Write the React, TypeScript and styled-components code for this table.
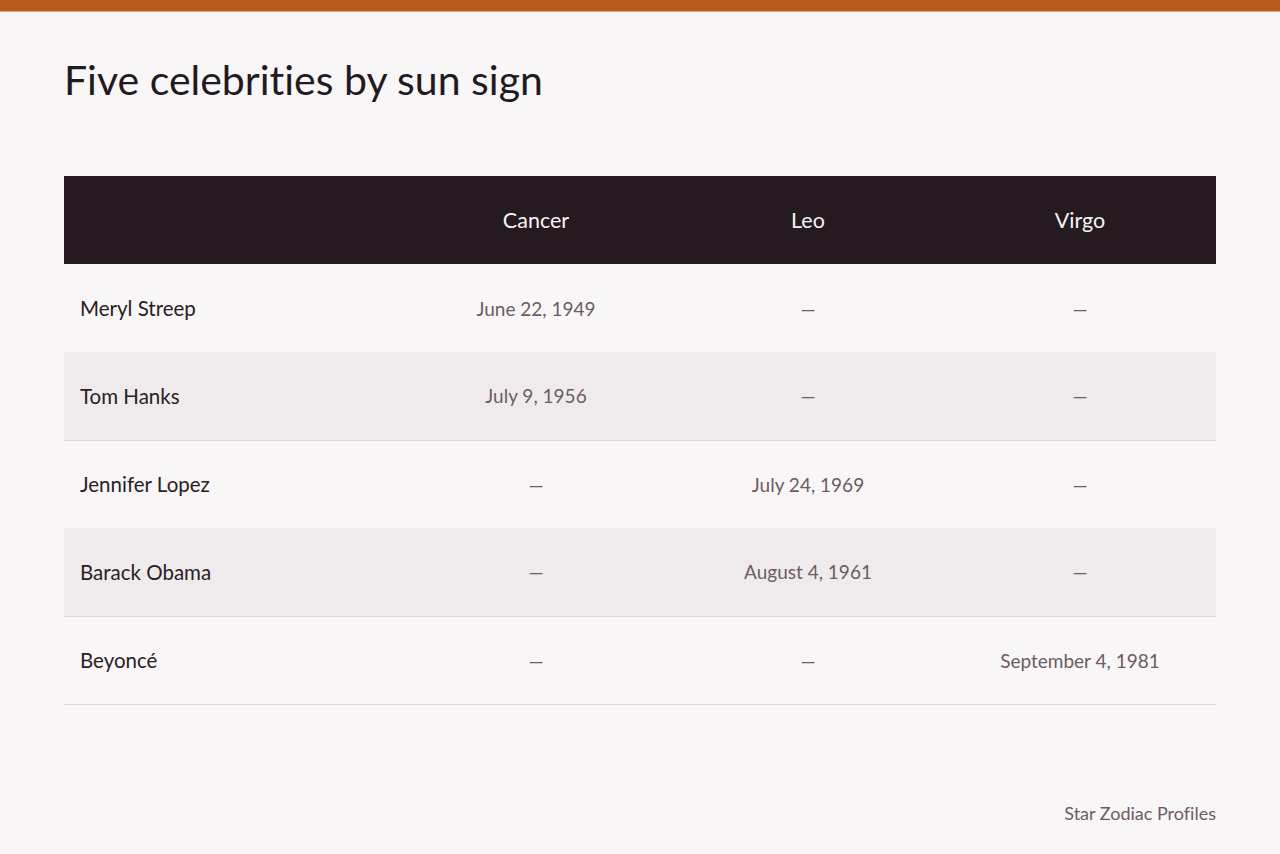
import React from "react";
import styled, { createGlobalStyle } from "styled-components";

const Global = createGlobalStyle`
  html, body { margin: 0; padding: 0; background: #f8f6f7; }
  body {
    font-family: Lato, "Noto Sans", "Liberation Sans", sans-serif;
    -webkit-font-smoothing: antialiased;
    font-variant-ligatures: none;
    font-feature-settings: "liga" 0, "dlig" 0;
  }
  * { box-sizing: border-box; }
`;

const TopBar = styled.div`
  height: 12px;
  background: #b95b21;
  border-bottom: 1px solid #e7a57a;
`;

const Page = styled.main`
  padding: 0 64px;
  display: flex;
  flex-direction: column;
`;

const Title = styled.h1`
  margin: 44px 0 0;
  font-size: 41px;
  line-height: 48px;
  font-weight: 400;
  color: #231a1f;
`;

const Table = styled.table`
  margin-top: 72px;
  width: 100%;
  border-collapse: collapse;
  table-layout: fixed;
`;

const HeadRow = styled.tr`
  background: #251a20;
  height: 88px;
`;

const HeadCell = styled.th<{ $first?: boolean }>`
  padding: 0 16px;
  font-size: 21.5px;
  font-weight: 400;
  color: #f7f4f5;
  text-align: center;
  width: ${(p) => (p.$first ? "336px" : "auto")};
`;

const Row = styled.tr<{ $shaded?: boolean; $last?: boolean }>`
  height: 88px;
  background: ${(p) => (p.$shaded ? "#efebec" : "transparent")};
  border-bottom: ${(p) => (p.$shaded || p.$last ? "1px solid #dcd7d9" : "none")};
`;

const NameCell = styled.td`
  padding: 0 16px;
  font-size: 20.5px;
  color: #2a2024;
  text-align: left;
`;

const ValueCell = styled.td`
  padding: 0 16px;
  font-size: 19px;
  color: #6d5b62;
  text-align: center;
`;

const Footer = styled.footer`
  margin-top: 96px;
  text-align: right;
  font-size: 18px;
  line-height: 24px;
  color: #6d5b62;
`;

const signs = ["Cancer", "Leo", "Virgo"];

const rows: { name: string; values: string[] }[] = [
  { name: "Meryl Streep", values: ["June 22, 1949", "—", "—"] },
  { name: "Tom Hanks", values: ["July 9, 1956", "—", "—"] },
  { name: "Jennifer Lopez", values: ["—", "July 24, 1969", "—"] },
  { name: "Barack Obama", values: ["—", "August 4, 1961", "—"] },
  { name: "Beyoncé", values: ["—", "—", "September 4, 1981"] },
];

export default function App() {
  return (
    <>
      <Global />
      <TopBar />
      <Page>
        <Title>Five celebrities by sun sign</Title>
        <Table>
          <thead>
            <HeadRow>
              <HeadCell $first />
              {signs.map((s) => (
                <HeadCell key={s}>{s}</HeadCell>
              ))}
            </HeadRow>
          </thead>
          <tbody>
            {rows.map((r, i) => (
              <Row key={r.name} $shaded={i % 2 === 1} $last={i === rows.length - 1}>
                <NameCell>{r.name}</NameCell>
                {r.values.map((v, j) => (
                  <ValueCell key={j}>{v}</ValueCell>
                ))}
              </Row>
            ))}
          </tbody>
        </Table>
        <Footer>Star Zodiac Profiles</Footer>
      </Page>
    </>
  );
}
